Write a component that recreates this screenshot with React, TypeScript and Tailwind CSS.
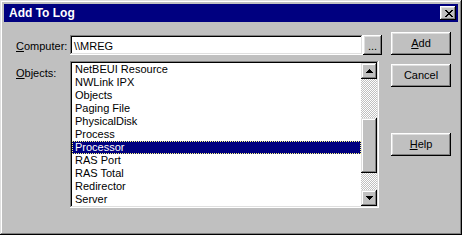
import React from 'react';

const frame =
  'shadow-[inset_-1px_-1px_#000000,inset_1px_1px_#dfdfdf,inset_-2px_-2px_#808080,inset_2px_2px_#ffffff]';
const raised =
  'shadow-[inset_-1px_-1px_#000000,inset_1px_1px_#ffffff,inset_-2px_-2px_#808080,inset_2px_2px_#dfdfdf]';
const sunken =
  'shadow-[inset_-1px_-1px_#ffffff,inset_1px_1px_#808080,inset_-2px_-2px_#dfdfdf,inset_2px_2px_#000000]';

const items = [
  'NetBEUI Resource',
  'NWLink IPX',
  'Objects',
  'Paging File',
  'PhysicalDisk',
  'Process',
  'Processor',
  'RAS Port',
  'RAS Total',
  'Redirector',
  'Server',
];

// pixel glyphs, like the old 95 bitmaps
const closeGlyph = ['11000011', '01100110', '00111100', '00011000', '00111100', '01100110', '11000011'];
const upGlyph = ['0001000', '0011100', '0111110', '1111111'];

const Pixels: React.FC<{ rows: string[] }> = ({ rows }) => (
  <svg width={rows[0].length} height={rows.length} shapeRendering="crispEdges">
    {rows.map((row, y) =>
      row.split('').map((c, x) => (c === '1' ? <rect key={`${x}-${y}`} x={x} y={y} width={1} height={1} fill="#000" /> : null))
    )}
  </svg>
);

const Button: React.FC<{ children: React.ReactNode; className?: string }> = ({ children, className = '' }) => (
  <div className={`w-[60px] h-[23px] flex items-center justify-center bg-[#c0c0c0] ${raised} ${className}`}>{children}</div>
);

export default function App() {
  return (
    <div className="w-[466px] h-[241px] bg-white font-['Liberation_Sans',Arial,sans-serif] text-[11px] text-black">
      <div className={`w-[462px] h-[235px] bg-[#c0c0c0] p-[4px] flex flex-col ${frame}`}>
        {/* title bar */}
        <div className="h-[18px] bg-[#000080] flex items-center justify-between pl-[5px] pr-[2px]">
          <span className="text-white font-bold text-[12px]">Add To Log</span>
          <div className={`w-[16px] h-[14px] bg-[#c0c0c0] flex items-center justify-center pl-[1px] ${raised}`}>
            <Pixels rows={closeGlyph} />
          </div>
        </div>

        <div className="flex pl-[12px] pt-[10px]">
          <div className="flex flex-col mt-[3px]">
            <div className="flex">
              <div className="w-[54px] pt-[3px]">
                <span className="underline">C</span>omputer:
              </div>
              <div className={`w-[293px] h-[20px] bg-white px-[4px] pt-[3px] ${sunken}`}>\\MREG</div>
              <div className={`w-[19px] h-[20px] flex items-center justify-center pt-[3px] ${raised}`}>...</div>
            </div>

            <div className="flex mt-[6px]">
              <div className="w-[54px] pt-[4px]">
                <span className="underline">O</span>bjects:
              </div>
              <div className={`w-[309px] h-[147px] bg-white p-[2px] flex ${sunken}`}>
                <div className="flex-1 flex flex-col">
                  {items.map(item => (
                    <div
                      key={item}
                      className={`h-[13px] leading-[13px] pl-[3px] whitespace-nowrap ${
                        item === 'Processor'
                          ? 'bg-[#000080] text-white outline-1 outline-dotted outline-[#ffff80] -outline-offset-1'
                          : ''
                      }`}
                    >
                      {item}
                    </div>
                  ))}
                </div>
                <div className="w-[16px] flex flex-col">
                  <div className={`h-[16px] bg-[#c0c0c0] flex items-center justify-center ${frame}`}>
                    <Pixels rows={upGlyph} />
                  </div>
                  <div className="flex-1 bg-[image:repeating-conic-gradient(#c0c0c0_0%_25%,#ffffff_0%_50%)] bg-[length:2px_2px]">
                    <div className={`mt-[39px] h-[55px] bg-[#c0c0c0] ${frame}`} />
                  </div>
                  <div className={`h-[16px] bg-[#c0c0c0] flex items-center justify-center ${frame}`}>
                    <Pixels rows={[...upGlyph].reverse()} />
                  </div>
                </div>
              </div>
            </div>
          </div>

          <div className="flex flex-col ml-[9px]">
            <Button>
              <span>
                <span className="underline">A</span>dd
              </span>
            </Button>
            <Button className="mt-[9px]">Cancel</Button>
            <Button className="mt-[46px]">
              <span>
                <span className="underline">H</span>elp
              </span>
            </Button>
          </div>
        </div>
      </div>
    </div>
  );
}
